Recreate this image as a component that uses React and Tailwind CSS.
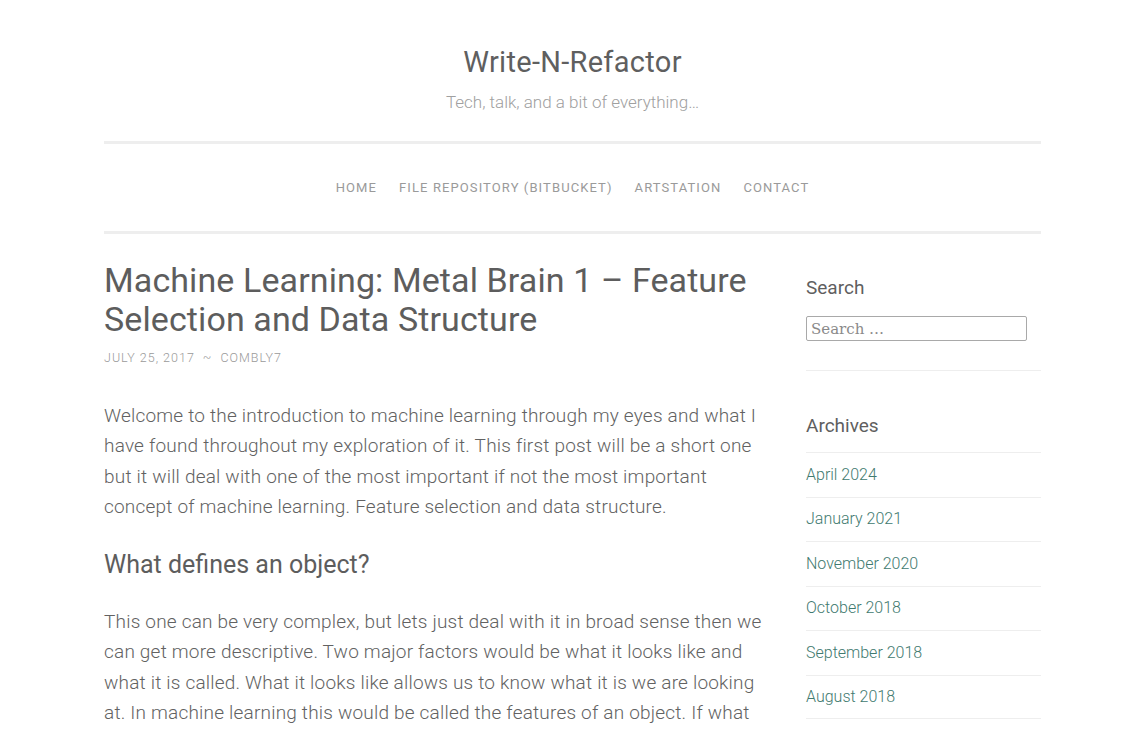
const archives = [
  'April 2024',
  'January 2021',
  'November 2020',
  'October 2018',
  'September 2018',
  'August 2018',
];

const nav = ['Home', 'File Repository (Bitbucket)', 'ArtStation', 'Contact'];

function Sidebar() {
  return (
    <aside className="w-[235px] shrink-0">
      <section className="border-b border-[#eeeeee] pb-[29px] pt-[12px]">
        <h3 className="text-[19px] leading-[30px] text-[#5f5f5f]">Search</h3>
        <form className="mt-[13px]">
          <input
            type="search"
            placeholder="Search …"
            className="h-[25px] w-[221px] rounded-[2px] border border-[#a9a9a9] px-[4px] text-[#555] placeholder:text-[#8a8a8a] outline-none"
            style={{ fontFamily: '"DejaVu Serif", serif', fontSize: 15 }}
          />
        </form>
      </section>
      <section className="pt-[40px]">
        <h3 className="text-[19px] leading-[30px] text-[#5f5f5f] pb-[11px]">Archives</h3>
        <ul>
          {archives.map((a) => (
            <li key={a} className="border-t border-[#eeeeee] h-[44.5px] flex items-center last:border-b">
              <a href="#" className="text-[16px] font-light text-[#3f7a6f]">{a}</a>
            </li>
          ))}
        </ul>
      </section>
    </aside>
  );
}

function Post() {
  return (
    <article className="w-[660px] shrink-0">
      <h1 className="text-[34px] leading-[39px] text-[#5d5d5d] tracking-[0.1px]">
        Machine Learning: Metal Brain 1 – Feature Selection and Data Structure
      </h1>
      <div className="mt-[10px] text-[12.5px] uppercase tracking-[1px] text-[#9a9a9a] font-light">
        <a href="#">July 25, 2017</a>
        <span className="mx-[8px]">~</span>
        <a href="#">combly7</a>
      </div>
      <div className="mt-[33px] text-[19px] leading-[30.5px] tracking-[0.2px] font-light text-[#626262]">
        <p>
          Welcome to the introduction to machine learning through my eyes and what I have found
          throughout my exploration of it. This first post will be a short one but it will deal
          with one of the most important if not the most important concept of machine learning.
          Feature selection and data structure.
        </p>
        <h2 className="mt-[27px] mb-[27px] text-[25px] leading-[30px] tracking-normal font-normal text-[#5d5d5d]">
          What defines an object?
        </h2>
        <p>
          This one can be very complex, but lets just deal with it in broad sense then we can get
          more descriptive. Two major factors would be what it looks like and what it is called.
          What it looks like allows us to know what it is we are looking at. In machine learning
          this would be called the features of an object. If what it is called is the label, then
          we have the data we need.
        </p>
      </div>
    </article>
  );
}

export default function App() {
  return (
    <div className="min-h-screen bg-white" style={{ fontFamily: 'Roboto, "Noto Sans", sans-serif' }}>
      <div className="ml-[104px] w-[937px]">
        <header className="pt-[44px] text-center">
          <h1 className="text-[29px] leading-[36px] text-[#5f5f5f] tracking-[0.3px]">
            <a href="#">Write-N-Refactor</a>
          </h1>
          <p className="mt-[9px] text-[17px] leading-[26px] font-light text-[#a0a0a0]">
            Tech, talk, and a bit of everything…
          </p>
        </header>
        <nav className="mt-[26px] border-y-[3px] border-[#eeeeee] h-[93px] flex items-center justify-center gap-[22px]">
          {nav.map((n) => (
            <a key={n} href="#" className="text-[13px] uppercase tracking-[1.1px] text-[#9a9a9a]">
              {n}
            </a>
          ))}
        </nav>
        <div className="flex gap-[42px] pt-[27px]">
          <Post />
          <Sidebar />
        </div>
      </div>
    </div>
  );
}
